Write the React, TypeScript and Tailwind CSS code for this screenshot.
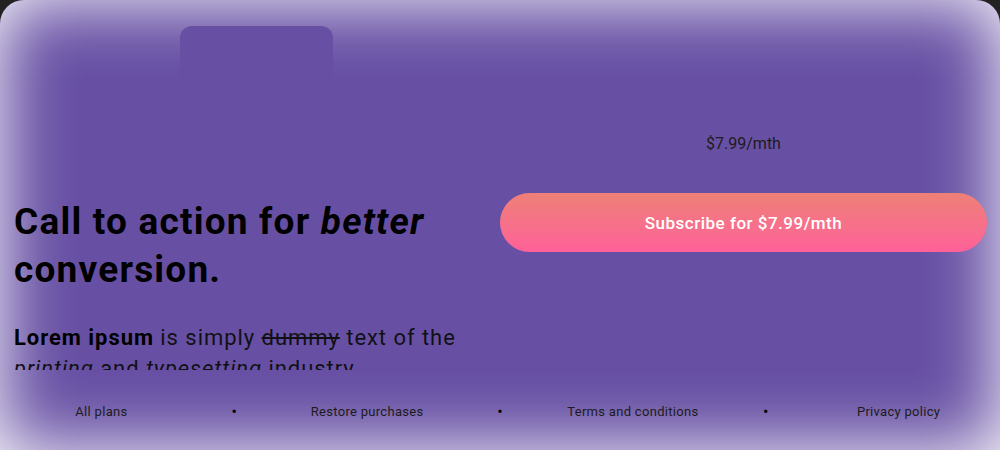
import React from "react";

export default function App() {
  const links = ["All plans", "•", "Restore purchases", "•", "Terms and conditions", "•", "Privacy policy"];
  return (
    <div className="w-[1000px] h-[450px] bg-[#222222] overflow-hidden" style={{ fontFamily: "Roboto, 'Noto Sans', sans-serif" }}>
      <div className="w-full h-full rounded-t-[24px] bg-[#6750a4] shadow-[inset_0_0_70px_0_rgba(255,255,255,1)] flex flex-col overflow-hidden">
        <div className="flex h-[370px] overflow-hidden">
          <div className="w-[486px] pl-[14px] flex flex-col overflow-hidden">
            <div className="ml-[166px] mt-[26px] w-[153px] h-[110px] shrink-0 rounded-[12px] bg-[#6750a4]" />
            <h1 className="mt-[62px] text-[37px] leading-[48px] font-bold text-black tracking-[1.2px] whitespace-nowrap">
              Call to action for <em>better</em>
              <br />
              conversion.
            </h1>
            <p className="mt-[28px] text-[22px] leading-[31px] text-[#111015] tracking-[0.95px]">
              <strong className="font-bold text-black">Lorem ipsum</strong> is simply <s>dummy</s> text of the{" "}
              <em>printing</em> and <em>typesetting</em> industry.
            </p>
          </div>
          <div className="flex-1 pl-[14px] pr-[13px] flex flex-col items-stretch">
            <div className="mt-[134px] text-center text-[16px] leading-[20px] text-[#1d1b20]">$7.99/mth</div>
            <button className="mt-[39px] h-[59px] pt-[2px] rounded-full bg-gradient-to-b from-[#ee8076] to-[#fe6099] text-white text-[17px] font-medium tracking-[0.5px]">
              Subscribe for $7.99/mth
            </button>
          </div>
        </div>
        <div className="flex-1 flex items-start pt-[33px] px-[35px]">
          {links.map((l, i) => (
            <div key={i} className="flex-1 text-center text-[13px] leading-[18px] text-[#1d1b20] tracking-[0.3px]">
              {l === "•" ? <span className="text-black text-[16px] leading-[18px]">•</span> : l}
            </div>
          ))}
        </div>
      </div>
    </div>
  );
}
